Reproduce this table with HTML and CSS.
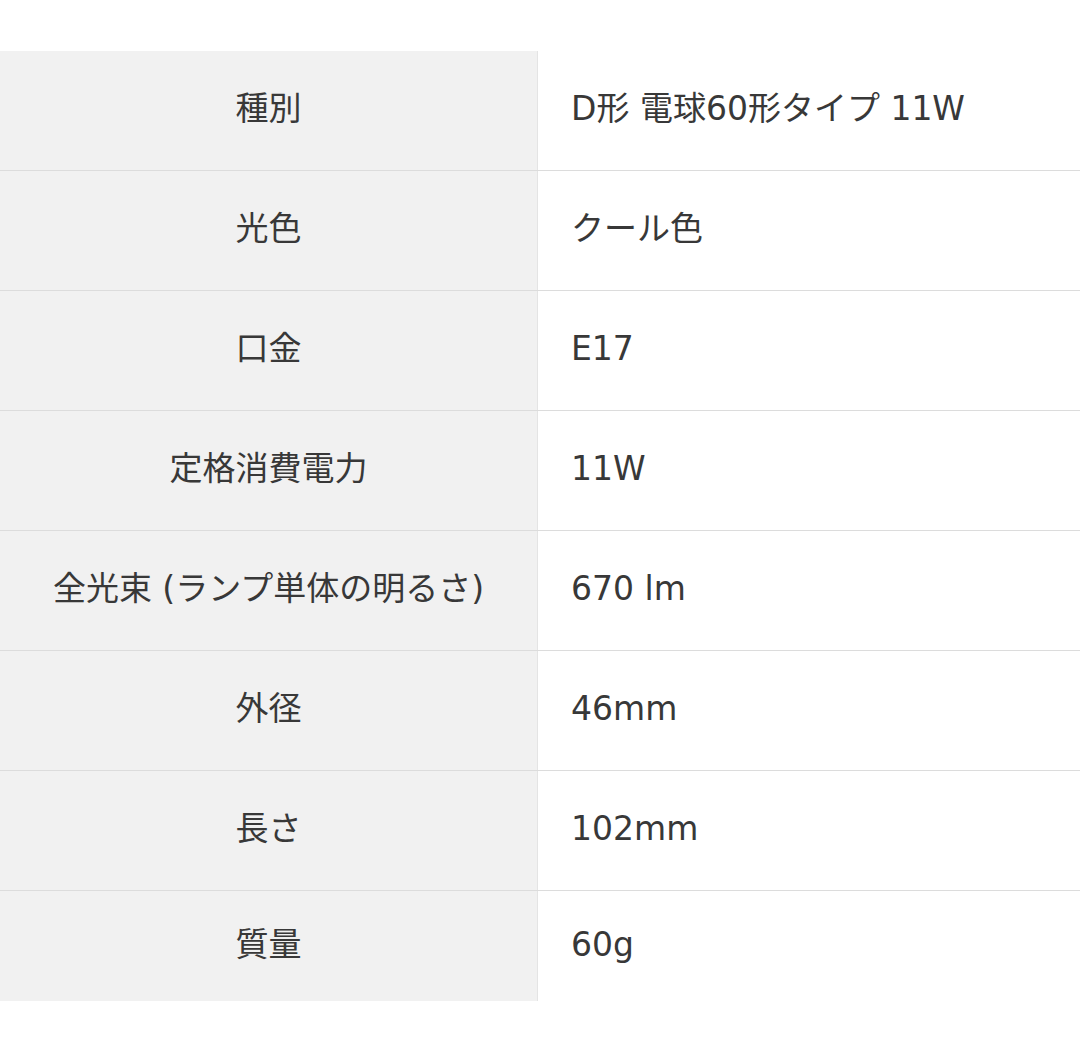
FILE: index.html
```html
<!DOCTYPE html>
<html lang="ja">
<head>
<meta charset="utf-8">
<link rel="stylesheet" href="styles.css">
</head>
<body>
<table class="spec">
  <tbody>
    <tr><th>種別</th><td>D形 電球60形タイプ 11W</td></tr>
    <tr><th>光色</th><td>クール色</td></tr>
    <tr><th>口金</th><td>E17</td></tr>
    <tr><th>定格消費電力</th><td>11W</td></tr>
    <tr><th>全光束 (ランプ単体の明るさ)</th><td>670 lm</td></tr>
    <tr><th>外径</th><td>46mm</td></tr>
    <tr><th>長さ</th><td>102mm</td></tr>
    <tr><th>質量</th><td>60g</td></tr>
  </tbody>
</table>
</body>
</html>
```
FILE: styles.css
```css
html, body {
  margin: 0;
  padding: 0;
  background: #ffffff;
}
body {
  padding-top: 51px;
  overflow: hidden;
  font-family: "DejaVu Sans", "Noto Sans CJK JP", sans-serif;
  color: #383838;
}
.spec {
  border-collapse: collapse;
  width: 1100px;
  table-layout: fixed;
}
.spec th,
.spec td {
  height: 115px;
  padding: 0 0 4px 0;
  font-size: 33px;
  font-weight: 400;
  line-height: 1;
  vertical-align: middle;
  border-bottom: 1px solid #dcdcdc;
}
.spec th {
  width: 537px;
  background: #f1f1f1;
  text-align: center;
  border-right: 1px solid #e4e4e4;
}
.spec td {
  text-align: left;
  padding-left: 33px;
  background: #ffffff;
}
.spec tr:last-child th,
.spec tr:last-child td {
  height: 106px;
  border-bottom: none;
}
```
